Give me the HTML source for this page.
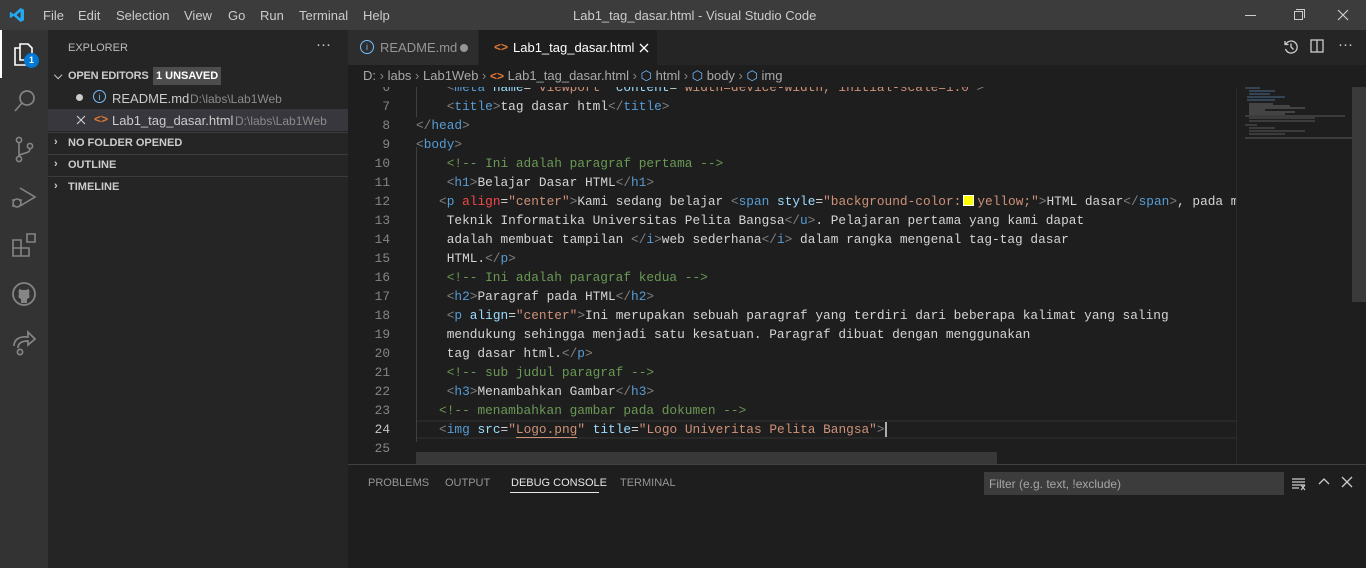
<!DOCTYPE html>
<html><head><meta charset="utf-8"><style>
*{margin:0;padding:0;box-sizing:border-box}
body{width:1366px;height:568px;overflow:hidden;background:#1e1e1e;font-family:"Liberation Sans",sans-serif;color:#ccc;position:relative}
.abs{position:absolute}
#title{left:0;top:0;width:1366px;height:30px;background:#3c3c3c}
#title .m{position:absolute;top:8px;font-size:13px;color:#ccc}
#act{left:0;top:30px;width:48px;height:538px;background:#333}
#side{left:48px;top:30px;width:300px;height:538px;background:#252526}
.sh{position:absolute;font-size:11px;font-weight:bold;color:#ccc}
#tabs{left:348px;top:30px;width:1018px;height:35px;background:#252526}
#bc{left:348px;top:65px;width:1018px;height:22px;background:#1e1e1e;font-size:13px;color:#a9a9a9}
#code{left:348px;top:87px;width:888px;height:377px;overflow:hidden}
.ln{position:absolute;left:0;width:42px;text-align:right;font:12.8px "Liberation Mono",monospace;color:#858585}
.cl{position:absolute;left:68px;white-space:pre;font:12.8px "Liberation Mono",monospace;color:#d4d4d4}
.t{color:#808080}.n{color:#569cd6}.a{color:#9cdcfe}.r{color:#f44747}.s{color:#ce9178}.c{color:#6a9955}
#panel{left:348px;top:464px;width:1018px;height:104px;background:#1e1e1e;border-top:1px solid #414141}
.pt{position:absolute;top:12px;font-size:11px;color:#969696}
</style></head><body>
<div id="title" class="abs">
<svg style="position:absolute;left:9px;top:7px" width="16" height="16" viewBox="0 0 16 16"><path d="M11.5 1 L15 2.7 V13.3 L11.5 15 L4.5 8.8 L1.8 11 L0.8 10.4 V5.6 L1.8 5 L4.5 7.2 Z M11.5 4.5 L7.5 8 L11.5 11.5Z" fill="#23a9f2"/></svg>
<span class="m" style="left:43px">File</span><span class="m" style="left:78px">Edit</span><span class="m" style="left:116px">Selection</span><span class="m" style="left:184px">View</span><span class="m" style="left:228px">Go</span><span class="m" style="left:260px">Run</span><span class="m" style="left:299px">Terminal</span><span class="m" style="left:363px">Help</span>
<span class="m" style="left:573px">Lab1_tag_dasar.html - Visual Studio Code</span>
<div style="position:absolute;left:1245px;top:15px;width:11px;height:1px;background:#ccc"></div>
<div style="position:absolute;left:1294px;top:11px;width:9px;height:9px;border:1px solid #ccc"></div>
<div style="position:absolute;left:1296px;top:9px;width:9px;height:9px;border-top:1px solid #ccc;border-right:1px solid #ccc"></div>
<svg style="position:absolute;left:1337px;top:9px" width="12" height="12"><path d="M1 1L11 11M11 1L1 11" stroke="#ccc" stroke-width="1.2"/></svg>
</div>
<div id="act" class="abs">
<div style="position:absolute;left:0;top:0;width:2px;height:48px;background:#fff"></div>
<svg style="position:absolute;left:12px;top:10px" width="26" height="28" viewBox="0 0 26 28" fill="none" stroke="#fff" stroke-width="1.6"><path d="M8 4H16L20 8V20H8Z M8 8H3V25H14V20"/></svg>
<div style="position:absolute;left:24px;top:23px;width:15px;height:15px;border-radius:50%;background:#0078d4;color:#fff;font-size:9px;font-weight:bold;text-align:center;line-height:15px">1</div>
<svg style="position:absolute;left:12px;top:58px" width="26" height="26" fill="none" stroke="#858585" stroke-width="1.7"><circle cx="15" cy="10" r="7"/><path d="M10 15L3 23"/></svg>
<svg style="position:absolute;left:12px;top:106px" width="26" height="28" fill="none" stroke="#858585" stroke-width="1.6"><circle cx="7" cy="4" r="2.6"/><circle cx="7" cy="23" r="2.6"/><circle cx="18" cy="10" r="2.6"/><path d="M7 7V20M18 13C18 18 8 17 7 20"/></svg>
<svg style="position:absolute;left:10px;top:152px" width="28" height="30" fill="none" stroke="#858585" stroke-width="1.6"><path d="M10 6L25 15L10 24"/><circle cx="7" cy="21" r="4"/><path d="M2 18H4M2 24H4M10 18H12"/></svg>
<svg style="position:absolute;left:11px;top:202px" width="26" height="26" fill="none" stroke="#858585" stroke-width="1.6"><path d="M2 8H10V24H2ZM2 16H18V24H10M16 2H24V10H16Z"/></svg>
<svg style="position:absolute;left:11px;top:251px" width="26" height="26" fill="none" stroke="#858585" stroke-width="1.8"><circle cx="13" cy="13" r="11"/><path d="M10 22V18C7 17 7 15 8 13C7 10 8 8 9 8L11 9H15L17 8C18 8 19 10 18 13C19 15 19 17 16 18V22" fill="#858585" stroke="none"/></svg>
<svg style="position:absolute;left:10px;top:298px" width="28" height="28" fill="none" stroke="#858585" stroke-width="1.7"><path d="M4 18C4 11 10 8 18 9V4L25 11L18 17V13C12 13 8 15 8 20"/><circle cx="10" cy="24" r="2.6"/></svg>
</div>
<div id="side" class="abs">
<span style="position:absolute;left:20px;top:12px;font-size:11px;color:#bbb">EXPLORER</span>
<span style="position:absolute;left:268px;top:6px;font-size:15px;color:#ccc">···</span>
<span class="sh" style="left:6px;top:40px">⌵</span><span class="sh" style="left:20px;top:40px;letter-spacing:-0.2px">OPEN EDITORS</span>
<span style="position:absolute;left:105px;top:37px;height:18px;padding:0 3px;background:#4d4d4d;font-size:11px;font-weight:bold;color:#fff;line-height:18px">1 UNSAVED</span>
<div style="position:absolute;left:28px;top:64px;width:7px;height:7px;border-radius:50%;background:#ccc"></div>
<span style="position:absolute;left:45px;top:60px;width:13px;height:13px;border:1px solid #75beff;border-radius:50%;color:#75beff;font-size:9px;text-align:center;line-height:12px">i</span>
<span style="position:absolute;left:64px;top:61px;font-size:13px;color:#ccc">README.md</span><span style="position:absolute;left:142px;top:62px;font-size:12px;color:#8b8b8b">D:\labs\Lab1Web</span>
<div style="position:absolute;left:0;top:79px;width:300px;height:22px;background:#37373d"></div>
<svg style="position:absolute;left:28px;top:85px" width="10" height="10"><path d="M1 1L9 9M9 1L1 9" stroke="#ccc" stroke-width="1.2"/></svg>
<span style="position:absolute;left:46px;top:82px;font-size:12px;color:#e37933;font-weight:bold">&lt;&gt;</span>
<span style="position:absolute;left:64px;top:83px;font-size:13px;color:#ccc">Lab1_tag_dasar.html</span><span style="position:absolute;left:187px;top:84px;font-size:12px;color:#8b8b8b">D:\labs\Lab1Web</span>
<div style="position:absolute;left:0;top:102px;width:300px;height:1px;background:#3c3c3c"></div>
<span class="sh" style="left:6px;top:106px">›</span><span class="sh" style="left:20px;top:107px">NO FOLDER OPENED</span>
<div style="position:absolute;left:0;top:124px;width:300px;height:1px;background:#3c3c3c"></div>
<span class="sh" style="left:6px;top:128px">›</span><span class="sh" style="left:20px;top:129px">OUTLINE</span>
<div style="position:absolute;left:0;top:146px;width:300px;height:1px;background:#3c3c3c"></div>
<span class="sh" style="left:6px;top:150px">›</span><span class="sh" style="left:20px;top:151px">TIMELINE</span>
</div>
<div id="tabs" class="abs">
<div style="position:absolute;left:0;top:0;width:130px;height:35px;background:#2d2d2d">
<span style="position:absolute;left:12px;top:10px;width:14px;height:14px;border:1px solid #75beff;border-radius:50%;color:#75beff;font-size:9px;text-align:center;line-height:13px">i</span>
<span style="position:absolute;left:32px;top:10px;font-size:13px;color:#969696">README.md</span>
<div style="position:absolute;left:112px;top:14px;width:8px;height:8px;border-radius:50%;background:#969696"></div></div>
<div style="position:absolute;left:131px;top:0;width:178px;height:35px;background:#1e1e1e">
<span style="position:absolute;left:15px;top:10px;font-size:12px;color:#e37933;font-weight:bold">&lt;&gt;</span>
<span style="position:absolute;left:34px;top:10px;font-size:13px;color:#fff">Lab1_tag_dasar.html</span>
<svg style="position:absolute;left:160px;top:13px" width="10" height="10"><path d="M1 1L9 9M9 1L1 9" stroke="#fff" stroke-width="1.3"/></svg></div>
<svg style="position:absolute;left:935px;top:9px" width="16" height="16" fill="none" stroke="#ccc" stroke-width="1.3"><path d="M3 5A6 6 0 1 1 2.5 10M2 2V5.5H5.5M8 4.5V8L10.5 10.5"/></svg>
<svg style="position:absolute;left:962px;top:9px" width="15" height="15" fill="none" stroke="#ccc" stroke-width="1.3"><rect x="1" y="1" width="12" height="12"/><path d="M7 1V13"/></svg>
<span style="position:absolute;left:990px;top:6px;font-size:15px;color:#ccc">···</span>
</div>
<div id="bc" class="abs"><span style="position:absolute;left:15px;top:3px;white-space:nowrap">D: <span style="color:#888">›</span> labs <span style="color:#888">›</span> Lab1Web <span style="color:#888">›</span> <b style="color:#e37933;font-size:12px">&lt;&gt;</b> Lab1_tag_dasar.html <span style="color:#888">›</span> <span style="color:#75beff">⬡</span> html <span style="color:#888">›</span> <span style="color:#75beff">⬡</span> body <span style="color:#888">›</span> <span style="color:#75beff">⬡</span> img</span></div>
<div id="code" class="abs">
<div style="position:absolute;left:68px;top:333px;width:820px;height:19px;border-top:2px solid #282828;border-bottom:2px solid #282828"></div>
<div style="position:absolute;left:68px;top:0;width:1px;height:30px;background:#404040"></div>
<div style="position:absolute;left:68px;top:60px;width:1px;height:295px;background:#404040"></div>
<div style="position:absolute;left:68px;top:365px;width:581px;height:12px;background:#424242;opacity:.75"></div>
<div style="position:absolute;left:0;top:-7px;width:900px">
<div class="ln" style="top:0">6</div><div class="cl" style="top:0">    <span class="t">&lt;</span><span class="n">meta</span> <span class="a">name</span>=<span class="s">"viewport"</span> <span class="a">content</span>=<span class="s">"width=device-width, initial-scale=1.0"</span><span class="t">&gt;</span></div>
<div class="ln" style="top:19px">7</div><div class="cl" style="top:19px">    <span class="t">&lt;</span><span class="n">title</span><span class="t">&gt;</span>tag dasar html<span class="t">&lt;/</span><span class="n">title</span><span class="t">&gt;</span></div>
<div class="ln" style="top:38px">8</div><div class="cl" style="top:38px"><span class="t">&lt;/</span><span class="n">head</span><span class="t">&gt;</span></div>
<div class="ln" style="top:57px">9</div><div class="cl" style="top:57px"><span class="t">&lt;</span><span class="n">body</span><span class="t">&gt;</span></div>
<div class="ln" style="top:76px">10</div><div class="cl" style="top:76px">    <span class="c">&lt;!-- Ini adalah paragraf pertama --&gt;</span></div>
<div class="ln" style="top:95px">11</div><div class="cl" style="top:95px">    <span class="t">&lt;</span><span class="n">h1</span><span class="t">&gt;</span>Belajar Dasar HTML<span class="t">&lt;/</span><span class="n">h1</span><span class="t">&gt;</span></div>
<div class="ln" style="top:114px">12</div><div class="cl" style="top:114px">   <span class="t">&lt;</span><span class="n">p</span> <span class="r">align</span>=<span class="s">"center"</span><span class="t">&gt;</span>Kami sedang belajar <span class="t">&lt;</span><span class="n">span</span> <span class="a">style</span>=<span class="s">"background-color:<span style="display:inline-block;width:11px;height:11px;background:#ff0;border:1px solid #fff;margin:0 3px -1px 2px"></span>yellow;"</span><span class="t">&gt;</span>HTML dasar<span class="t">&lt;/</span><span class="n">span</span><span class="t">&gt;</span>, pada mata kuliah</div>
<div class="ln" style="top:133px">13</div><div class="cl" style="top:133px">    Teknik Informatika Universitas Pelita Bangsa<span class="t">&lt;/</span><span class="n">u</span><span class="t">&gt;</span>. Pelajaran pertama yang kami dapat</div>
<div class="ln" style="top:152px">14</div><div class="cl" style="top:152px">    adalah membuat tampilan <span class="t">&lt;/</span><span class="n">i</span><span class="t">&gt;</span>web sederhana<span class="t">&lt;/</span><span class="n">i</span><span class="t">&gt;</span> dalam rangka mengenal tag-tag dasar</div>
<div class="ln" style="top:171px">15</div><div class="cl" style="top:171px">    HTML.<span class="t">&lt;/</span><span class="n">p</span><span class="t">&gt;</span></div>
<div class="ln" style="top:190px">16</div><div class="cl" style="top:190px">    <span class="c">&lt;!-- Ini adalah paragraf kedua --&gt;</span></div>
<div class="ln" style="top:209px">17</div><div class="cl" style="top:209px">    <span class="t">&lt;</span><span class="n">h2</span><span class="t">&gt;</span>Paragraf pada HTML<span class="t">&lt;/</span><span class="n">h2</span><span class="t">&gt;</span></div>
<div class="ln" style="top:228px">18</div><div class="cl" style="top:228px">    <span class="t">&lt;</span><span class="n">p</span> <span class="a">align</span>=<span class="s">"center"</span><span class="t">&gt;</span>Ini merupakan sebuah paragraf yang terdiri dari beberapa kalimat yang saling</div>
<div class="ln" style="top:247px">19</div><div class="cl" style="top:247px">    mendukung sehingga menjadi satu kesatuan. Paragraf dibuat dengan menggunakan</div>
<div class="ln" style="top:266px">20</div><div class="cl" style="top:266px">    tag dasar html.<span class="t">&lt;/</span><span class="n">p</span><span class="t">&gt;</span></div>
<div class="ln" style="top:285px">21</div><div class="cl" style="top:285px">    <span class="c">&lt;!-- sub judul paragraf --&gt;</span></div>
<div class="ln" style="top:304px">22</div><div class="cl" style="top:304px">    <span class="t">&lt;</span><span class="n">h3</span><span class="t">&gt;</span>Menambahkan Gambar<span class="t">&lt;/</span><span class="n">h3</span><span class="t">&gt;</span></div>
<div class="ln" style="top:323px">23</div><div class="cl" style="top:323px">   <span class="c">&lt;!-- menambahkan gambar pada dokumen --&gt;</span></div>
<div class="ln" style="top:342px;color:#c6c6c6">24</div><div class="cl" style="top:342px">   <span class="t">&lt;</span><span class="n">img</span> <span class="a">src</span>=<span class="s">"<span style="border-bottom:1px solid #ce9178">Logo.png</span>"</span> <span class="a">title</span>=<span class="s">"Logo Univeritas Pelita Bangsa"</span><span class="t">&gt;</span><span style="border-left:2px solid #aeafad"></span></div>
<div class="ln" style="top:361px">25</div>
</div></div>
<div class="abs" style="left:1236px;top:87px;width:116px;height:377px;background:#1e1e1e;border-left:1px solid #2a2a2a">
<svg width="116" height="60" style="position:absolute;left:8px;top:0"><g stroke-width="1">
<path d="M0 1H15M4 4H30M4 7H25M2 10H40M2 13H30" stroke="#4a6a8a"/><path d="M4 17H28M4 19H45M4 21H60M4 23H20M4 25H50M4 27H40" stroke="#6a6a6a"/><path d="M0 29H100M4 31H70M4 34H70M0 38H12M4 41H30M4 44H60M4 47H40M0 51H110" stroke="#5a5a5a"/></g></svg>
</div>
<div class="abs" style="left:1352px;top:87px;width:14px;height:215px;background:#3a3a3a"></div>
<div id="panel" class="abs">
<span class="pt" style="left:20px">PROBLEMS</span><span class="pt" style="left:97px">OUTPUT</span><span class="pt" style="left:163px;color:#e7e7e7">DEBUG CONSOLE</span>
<div style="position:absolute;left:162px;top:27px;width:89px;height:1px;background:#e7e7e7"></div>
<span class="pt" style="left:272px">TERMINAL</span>
<div style="position:absolute;left:636px;top:7px;width:300px;height:23px;background:#3c3c3c;font-size:12px;color:#a6a6a6;padding:5px 5px">Filter (e.g. text, !exclude)</div>
<svg style="position:absolute;left:943px;top:12px" width="16" height="14" stroke="#ccc" stroke-width="1.2"><path d="M1 2H14M1 5H14M1 8H14M1 11H8M10 8L14 13M14 8L10 13"/></svg>
<svg style="position:absolute;left:970px;top:12px" width="12" height="10" fill="none" stroke="#ccc" stroke-width="1.3"><path d="M1 7L6 2L11 7"/></svg>
<svg style="position:absolute;left:993px;top:11px" width="12" height="12" stroke="#ccc" stroke-width="1.3"><path d="M1 1L11 11M11 1L1 11"/></svg>
</div>
</body></html>
